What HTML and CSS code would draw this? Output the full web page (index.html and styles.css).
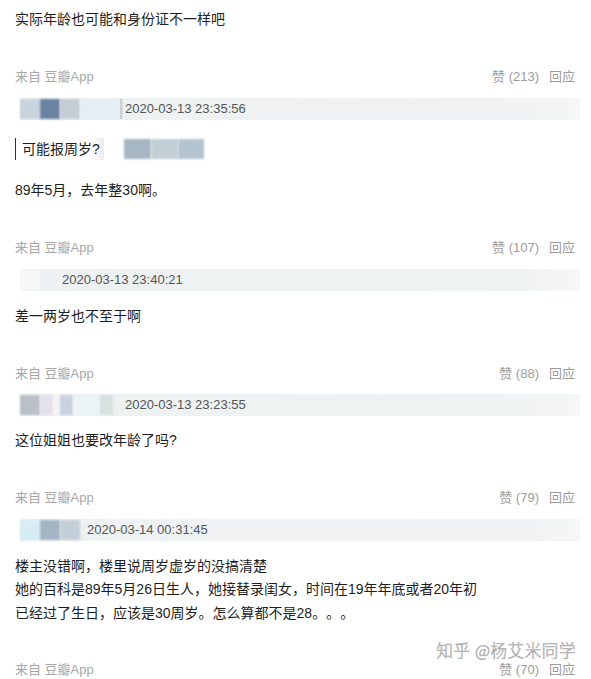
FILE: index.html
```html
<!DOCTYPE html>
<html lang="zh-CN">
<head>
<meta charset="utf-8">
<title>豆瓣评论</title>
<link rel="stylesheet" href="styles.css">
</head>
<body>
<div class="page">
  <p class="text">实际年龄也可能和身份证不一样吧</p>

  <div class="comment">
    <div class="meta"><span class="src">来自 豆瓣App</span><span class="acts"><span>赞 (213)</span><span>回应</span></span></div>
    <div class="bar">
      <span class="blk" style="width:20px;background:#c9d3dc"></span>
      <span class="blk" style="width:20px;background:#6a83a3"></span>
      <span class="blk" style="width:20px;background:#c3cdd6"></span>
      <span class="blk" style="width:40px;background:#e6eef5"></span>
      <span class="sep"></span>
      <span class="date first">2020-03-13 23:35:56</span>
    </div>
    <div class="quote-row">
      <span class="quote">可能报周岁?</span>
      <span class="qblur">
        <span class="blk" style="width:27px;background:#a6b6c2"></span>
        <span class="blk" style="width:27px;background:#c2ced6"></span>
        <span class="blk" style="width:26px;background:#b4c4d0"></span>
      </span>
    </div>
    <p class="text after-quote">89年5月，去年整30啊。</p>
  </div>

  <div class="comment">
    <div class="meta"><span class="src">来自 豆瓣App</span><span class="acts"><span>赞 (107)</span><span>回应</span></span></div>
    <div class="bar">
      <span class="blk" style="width:20px;background:#f6f8f8"></span>
      <span class="date" style="margin-left:22px">2020-03-13 23:40:21</span>
    </div>
    <p class="text">差一两岁也不至于啊</p>
  </div>

  <div class="comment">
    <div class="meta"><span class="src">来自 豆瓣App</span><span class="acts"><span>赞 (88)</span><span>回应</span></span></div>
    <div class="bar">
      <span class="blk" style="width:20px;background:#b9c0c6"></span>
      <span class="blk" style="width:13px;background:#e6e0ea"></span>
      <span class="blk" style="width:7px;background:#f4f4f6"></span>
      <span class="blk" style="width:13px;background:#c9d2dd"></span>
      <span class="blk" style="width:7px;background:#eef2f4"></span>
      <span class="blk" style="width:20px;background:#e9f4f6"></span>
      <span class="blk" style="width:13px;background:#d6e2df"></span>
      <span class="date" style="margin-left:12px">2020-03-13 23:23:55</span>
    </div>
    <p class="text tight">这位姐姐也要改年龄了吗?</p>
  </div>

  <div class="comment">
    <div class="meta"><span class="src">来自 豆瓣App</span><span class="acts"><span>赞 (79)</span><span>回应</span></span></div>
    <div class="bar">
      <span class="blk" style="width:20px;background:#d6edf3"></span>
      <span class="blk" style="width:20px;background:#a3b4c5"></span>
      <span class="blk" style="width:20px;background:#c3cfd9"></span>
      <span class="date" style="margin-left:7px">2020-03-14 00:31:45</span>
    </div>
    <p class="text">楼主没错啊，楼里说周岁虚岁的没搞清楚<br>她的百科是89年5月26日生人，她接替录闺女，时间在19年年底或者20年初<br>已经过了生日，应该是30周岁。怎么算都不是28<span class="dots">。。。</span></p>
  </div>

  <div class="comment last">
    <div class="meta"><span class="src">来自 豆瓣App</span><span class="acts"><span>赞 (70)</span><span>回应</span></span></div>
  </div>

  <div class="watermark">知乎 @杨艾米同学</div>
</div>
</body>
</html>
```

FILE: styles.css
```css
html, body {
  margin: 0;
  padding: 0;
  background: #ffffff;
}

body {
  font-family: "Liberation Sans", "Noto Sans CJK SC", sans-serif;
  color: #1e1e1e;
  text-spacing-trim: space-all;
}

.page {
  position: relative;
  width: 591px;
  height: 679px;
  box-sizing: border-box;
  padding: 8px 11px 0 15px;
  overflow: hidden;
}

.text {
  margin: 0;
  font-size: 14px;
  line-height: 23px;
}

.dots {
  font-family: "Noto Sans CJK SC", sans-serif;
}

.comment {
  margin-top: 36px;
}

.comment.last {
  margin-top: 35px;
}

.meta {
  display: flex;
  justify-content: space-between;
  align-items: center;
  height: 20px;
  line-height: 14px;
  font-size: 13px;
  color: #a8a8a8;
  padding-right: 5px;
}

.acts {
  display: flex;
  gap: 10px;
  color: #9c9c9c;
}

.bar {
  margin: 10.5px 0 0 5px;
  height: 22px;
  display: flex;
  align-items: center;
  background: linear-gradient(to right, #eef1f1 0%, #f0f3f3 90%, #f5f7f7 100%);
}

.blk {
  display: block;
  height: 20px;
  flex: none;
  filter: blur(1px);
}

.sep {
  display: block;
  width: 3px;
  height: 20px;
  background: linear-gradient(to right, #b8b8b8, #e8e8e8);
  flex: none;
}

.date {
  font-size: 13px;
  color: #555555;
  line-height: 22px;
}

.date.first {
  margin-left: 2px;
}

.bar + .text {
  margin-top: 14px;
}

.bar + .text.tight {
  margin-top: 13px;
}

.quote-row {
  margin-top: 18px;
  display: flex;
  align-items: center;
  height: 22px;
}

.quote {
  border-left: 1.5px solid #333333;
  padding-left: 6px;
  padding-right: 4px;
  font-size: 14px;
  line-height: 22px;
  background: linear-gradient(to right, #ffffff 85%, #ececec 100%);
}

.qblur {
  display: flex;
  margin-left: 20px;
}

.text.after-quote {
  margin-top: 19.5px;
}

.watermark {
  position: absolute;
  right: 15px;
  top: 642px;
  font-family: "Noto Sans CJK SC", sans-serif;
  font-size: 16.5px;
  line-height: 17px;
  font-weight: 300;
  color: rgba(255, 255, 255, 0.9);
  -webkit-text-stroke: 0.6px #a8a8a8;
  letter-spacing: 0.6px;
}
```
